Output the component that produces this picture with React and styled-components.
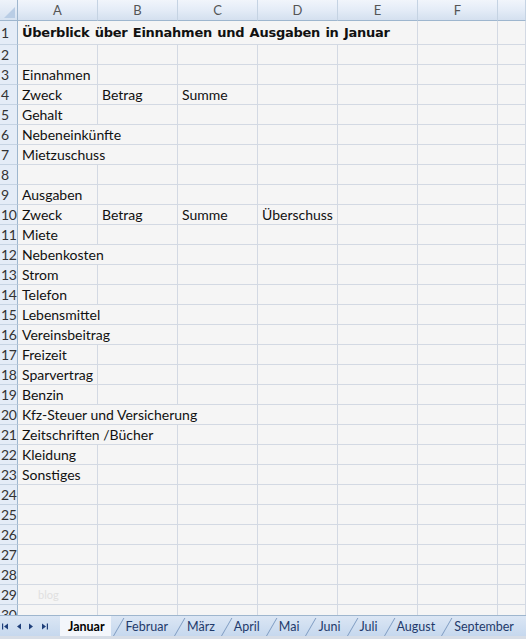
import React from 'react';
import styled, { createGlobalStyle } from 'styled-components';

const GlobalStyle = createGlobalStyle`
	html, body {
		margin: 0;
		padding: 0;
		background: #f5f5f5;
	}
	body {
		font-family: Lato, "Open Sans", sans-serif;
		overflow: hidden;
	}
`;

const COLS = ['A', 'B', 'C', 'D', 'E', 'F', ''];

// row number -> list of [column index, text, span]
const DATA = {
	3: [[0, 'Einnahmen', 1]],
	4: [[0, 'Zweck', 1], [1, 'Betrag', 1], [2, 'Summe', 1]],
	5: [[0, 'Gehalt', 1]],
	6: [[0, 'Nebeneinkünfte', 2]],
	7: [[0, 'Mietzuschuss', 2]],
	9: [[0, 'Ausgaben', 1]],
	10: [[0, 'Zweck', 1], [1, 'Betrag', 1], [2, 'Summe', 1], [3, 'Überschuss', 1]],
	11: [[0, 'Miete', 1]],
	12: [[0, 'Nebenkosten', 2]],
	13: [[0, 'Strom', 1]],
	14: [[0, 'Telefon', 1]],
	15: [[0, 'Lebensmittel', 2]],
	16: [[0, 'Vereinsbeitrag', 2]],
	17: [[0, 'Freizeit', 1]],
	18: [[0, 'Sparvertrag', 1]],
	19: [[0, 'Benzin', 1]],
	20: [[0, 'Kfz-Steuer und Versicherung', 3]],
	21: [[0, 'Zeitschriften /Bücher', 2]],
	22: [[0, 'Kleidung', 1]],
	23: [[0, 'Sonstiges', 1]],
};

const TABS = ['Januar', 'Februar', 'März', 'April', 'Mai', 'Juni', 'Juli', 'August', 'September'];

function buildCells(rowNum) {
	const entries = DATA[rowNum] || [];
	const cells = [];
	let c = 0;
	while (c < COLS.length) {
		const hit = entries.find((e) => e[0] === c);
		if (hit) {
			cells.push(
				<Cell key={c} $span={hit[2]}>
					{hit[1]}
				</Cell>
			);
			c += hit[2];
		} else {
			cells.push(<Cell key={c} $span={1} />);
			c += 1;
		}
	}
	return cells;
}

const NavIcon = ({ dir, bar }) => (
	<svg width="9" height="9" viewBox="0 0 9 9">
		{dir === 'left' ? (
			<>
				{bar && <rect x="1" y="1.5" width="1.2" height="6" fill="#1f3f7a" />}
				<polygon points="7,1.5 7,7.5 3,4.5" fill="#1f3f7a" />
			</>
		) : (
			<>
				<polygon points="2,1.5 2,7.5 6,4.5" fill="#1f3f7a" />
				{bar && <rect x="6.8" y="1.5" width="1.2" height="6" fill="#1f3f7a" />}
			</>
		)}
	</svg>
);

export default function App() {
	const rows = [];
	for (let r = 1; r <= 30; r++) {
		rows.push(
			<Row key={r} $height={r === 1 ? 24 : 20}>
				<RowHead>{r}</RowHead>
				{r === 1 ? (
					<>
						<TitleCell $span={5}>Überblick über Einnahmen und Ausgaben in Januar</TitleCell>
						<Cell $span={1} />
						<Cell $span={1} />
					</>
				) : r === 29 ? (
					<>
						<Cell $span={1}>
							<Watermark>blog</Watermark>
						</Cell>
						{COLS.slice(1).map((k, i) => (
							<Cell key={i} $span={1} />
						))}
					</>
				) : (
					buildCells(r)
				)}
			</Row>
		);
	}

	return (
		<>
			<GlobalStyle />
			<Window>
				<Sheet>
					<Row $height={21}>
						<Corner>
							<CornerMark />
						</Corner>
						{COLS.map((k, i) => (
							<ColHead key={i}>{k}</ColHead>
						))}
					</Row>
					{rows}
				</Sheet>
				<TabBar>
					<NavGroup>
						<NavIcon dir="left" bar />
						<NavIcon dir="left" />
						<NavIcon dir="right" />
						<NavIcon dir="right" bar />
					</NavGroup>
					<Tabs>
						{TABS.map((t, i) => (
							<Tab key={t} $active={i === 0}>
								{t}
							</Tab>
						))}
					</Tabs>
				</TabBar>
				<BottomStrip />
			</Window>
		</>
	);
}

const Window = styled.div`
	width: 526px;
	height: 639px;
	display: flex;
	flex-direction: column;
	overflow: hidden;
	background: #f5f5f5;
`;

const Sheet = styled.div`
	flex: 1;
	overflow: hidden;
	display: flex;
	flex-direction: column;
`;

const Row = styled.div`
	display: grid;
	grid-template-columns: 18px repeat(6, 80px) 1fr;
	height: ${(p) => p.$height}px;
	flex-shrink: 0;
`;

const Corner = styled.div`
	position: relative;
	background: linear-gradient(#eef3fa, #d6e2f1);
	border-right: 1px solid #9eb6ce;
	border-bottom: 1px solid #9eb6ce;
`;

const CornerMark = styled.div`
	position: absolute;
	right: 2px;
	bottom: 2px;
	width: 0;
	height: 0;
	border-left: 11px solid transparent;
	border-bottom: 11px solid #b9cde5;
`;

const ColHead = styled.div`
	display: flex;
	align-items: center;
	justify-content: center;
	background: linear-gradient(#f1f5fb 0%, #e4ecf7 50%, #d4e0ef 100%);
	border-right: 1px solid #c5d3e3;
	border-bottom: 1px solid #9eb6ce;
	color: #555;
	font-size: 13px;
`;

const RowHead = styled.div`
	display: flex;
	align-items: center;
	padding-left: 1px;
	background: #e4ecf7;
	border-right: 1px solid #9eb6ce;
	border-bottom: 1px solid #c5d3e3;
	color: #333;
	font-size: 14px;
	letter-spacing: -0.3px;
	overflow: hidden;
`;

const Cell = styled.div`
	grid-column: span ${(p) => p.$span};
	display: flex;
	align-items: flex-end;
	padding: 0 0 1px 4px;
	border-right: 1px solid #d3d9e3;
	border-bottom: 1px solid #d3d9e3;
	color: #111;
	font-size: 14px;
	white-space: nowrap;
	overflow: hidden;
`;

const TitleCell = styled(Cell)`
	font-family: "DejaVu Sans", sans-serif;
	font-weight: bold;
	font-size: 13px;
	letter-spacing: -0.25px;
	word-spacing: 1px;
	align-items: center;
	padding-bottom: 0;
`;

const Watermark = styled.span`
	margin-left: 16px;
	color: #e0e0e0;
	font-size: 11px;
	align-self: center;
`;

const TabBar = styled.div`
	height: 20px;
	flex-shrink: 0;
	display: flex;
	align-items: stretch;
	background: linear-gradient(#dbe6f4, #c6d8ee);
	border-top: 1px solid #9eb6ce;
`;

const NavGroup = styled.div`
	display: flex;
	align-items: center;
	gap: 4px;
	padding: 0 6px 0 1px;
	width: 50px;
	flex-shrink: 0;
`;

const Tabs = styled.div`
	display: flex;
	align-items: stretch;
	padding-left: 3px;
`;

const Tab = styled.div`
	position: relative;
	display: flex;
	align-items: center;
	padding: 0 ${(p) => (p.$active ? '6px 0 8px' : '4px 0 15px')};
	font-size: 12.5px;
	color: ${(p) => (p.$active ? '#000' : '#1f3a6b')};
	font-weight: ${(p) => (p.$active ? 'bold' : 'normal')};
	background: ${(p) => (p.$active ? '#f3f6fb' : 'transparent')};
	white-space: nowrap;

	&::before {
		content: '';
		position: absolute;
		left: 2px;
		top: 2px;
		bottom: 0;
		width: 0;
		border-left: 1px solid #7f9cc2;
		transform: skewX(-30deg);
		transform-origin: bottom left;
		display: ${(p) => (p.$active ? 'none' : 'block')};
	}
`;

const BottomStrip = styled.div`
	height: 3px;
	flex-shrink: 0;
	background: #d7dde6;
`;
